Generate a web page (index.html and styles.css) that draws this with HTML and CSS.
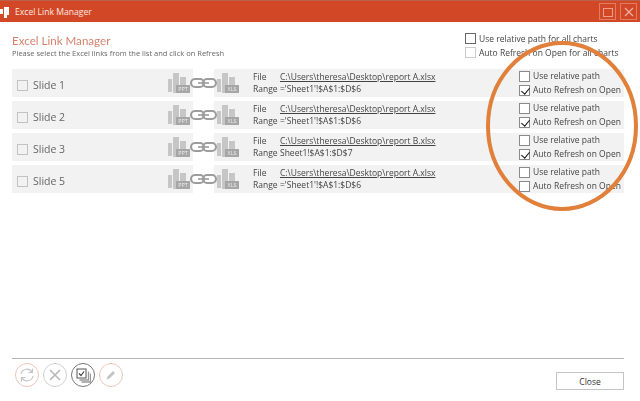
FILE: index.html
```
<!DOCTYPE html>
<html lang="en">
<head>
<meta charset="utf-8">
<title>Excel Link Manager</title>
<link rel="stylesheet" href="styles.css">
</head>
<body>
<div class="app">
  <header class="titlebar">
    <svg class="logo" width="9" height="12" viewBox="0 0 9 12"><path d="M0 3h3v5H0zM4 1h5v8H7v3H4z" fill="#fff"/></svg>
    <span class="titlebar-text">Excel Link Manager</span>
    <span class="win-btn"><svg width="12" height="12" viewBox="0 0 12 12"><rect x="1.500" y="2.500" width="9" height="8" fill="none" stroke="#e9a18d"/></svg></span>
    <span class="win-btn"><svg width="12" height="12" viewBox="0 0 12 12"><path d="M2 2l8 8M10 2l-8 8" stroke="#eeb3a3" stroke-width="1.200"/></svg></span>
  </header>

  <section class="head">
    <div class="head-left">
      <h1 class="heading">Excel Link Manager</h1>
      <p class="sub">Please select the Excel links from the list and click on Refresh</p>
    </div>
    <div class="head-right">
      <label class="opt"><span class="box box-dark"></span>Use relative path for all charts</label>
      <label class="opt"><span class="box box-light"></span>Auto Refresh on Open for all charts</label>
    </div>
  </section>

  <main class="list">
    <div class="row">
      <div class="slide"><span class="box box-slide"></span><span class="slide-name">Slide 1</span>
        <svg class="doc-icon" width="24" height="20" viewBox="0 0 24 20"><path d="M0 6h4v13H0zM5 0h6v20H5zM12 4h6v9h-6z" fill="#c6c6c6"/><rect x="8" y="12" width="14" height="8" fill="#a6a6a6"/><text x="15" y="18.300" class="tag">PPT</text></svg>
      </div>
      <div class="link"><svg width="27" height="12" viewBox="0 0 27 12"><g fill="none" stroke="#9c9c9c" stroke-width="2"><rect x="1" y="2" width="13" height="8" rx="4"/><rect x="13" y="2" width="13" height="8" rx="4"/></g><path d="M8 6h11" stroke="#9c9c9c" stroke-width="1.600"/></svg></div>
      <div class="info">
        <svg class="doc-icon xls" width="24" height="20" viewBox="0 0 24 20"><path d="M0 6h4v13H0zM5 0h6v20H5zM12 4h6v9h-6z" fill="#c6c6c6"/><rect x="8" y="12" width="14" height="8" fill="#a6a6a6"/><text x="15" y="18.300" class="tag">XLS</text></svg>
        <div class="meta">
          <div class="meta-line"><span class="meta-key">File</span><a class="path">C:\Users\theresa\Desktop\report A.xlsx</a></div>
          <div class="meta-line"><span class="meta-key">Range</span><span>='Sheet1'!$A$1:$D$6</span></div>
        </div>
        <div class="opts">
          <label class="opt"><span class="box"></span>Use relative path</label>
          <label class="opt"><span class="box checked"></span>Auto Refresh on Open</label>
        </div>
      </div>
    </div>
    <div class="row">
      <div class="slide"><span class="box box-slide"></span><span class="slide-name">Slide 2</span>
        <svg class="doc-icon" width="24" height="20" viewBox="0 0 24 20"><path d="M0 6h4v13H0zM5 0h6v20H5zM12 4h6v9h-6z" fill="#c6c6c6"/><rect x="8" y="12" width="14" height="8" fill="#a6a6a6"/><text x="15" y="18.300" class="tag">PPT</text></svg>
      </div>
      <div class="link"><svg width="27" height="12" viewBox="0 0 27 12"><g fill="none" stroke="#9c9c9c" stroke-width="2"><rect x="1" y="2" width="13" height="8" rx="4"/><rect x="13" y="2" width="13" height="8" rx="4"/></g><path d="M8 6h11" stroke="#9c9c9c" stroke-width="1.600"/></svg></div>
      <div class="info">
        <svg class="doc-icon xls" width="24" height="20" viewBox="0 0 24 20"><path d="M0 6h4v13H0zM5 0h6v20H5zM12 4h6v9h-6z" fill="#c6c6c6"/><rect x="8" y="12" width="14" height="8" fill="#a6a6a6"/><text x="15" y="18.300" class="tag">XLS</text></svg>
        <div class="meta">
          <div class="meta-line"><span class="meta-key">File</span><a class="path">C:\Users\theresa\Desktop\report A.xlsx</a></div>
          <div class="meta-line"><span class="meta-key">Range</span><span>='Sheet1'!$A$1:$D$6</span></div>
        </div>
        <div class="opts">
          <label class="opt"><span class="box"></span>Use relative path</label>
          <label class="opt"><span class="box checked"></span>Auto Refresh on Open</label>
        </div>
      </div>
    </div>
    <div class="row">
      <div class="slide"><span class="box box-slide"></span><span class="slide-name">Slide 3</span>
        <svg class="doc-icon" width="24" height="20" viewBox="0 0 24 20"><path d="M0 6h4v13H0zM5 0h6v20H5zM12 4h6v9h-6z" fill="#c6c6c6"/><rect x="8" y="12" width="14" height="8" fill="#a6a6a6"/><text x="15" y="18.300" class="tag">PPT</text></svg>
      </div>
      <div class="link"><svg width="27" height="12" viewBox="0 0 27 12"><g fill="none" stroke="#9c9c9c" stroke-width="2"><rect x="1" y="2" width="13" height="8" rx="4"/><rect x="13" y="2" width="13" height="8" rx="4"/></g><path d="M8 6h11" stroke="#9c9c9c" stroke-width="1.600"/></svg></div>
      <div class="info">
        <svg class="doc-icon xls" width="24" height="20" viewBox="0 0 24 20"><path d="M0 6h4v13H0zM5 0h6v20H5zM12 4h6v9h-6z" fill="#c6c6c6"/><rect x="8" y="12" width="14" height="8" fill="#a6a6a6"/><text x="15" y="18.300" class="tag">XLS</text></svg>
        <div class="meta">
          <div class="meta-line"><span class="meta-key">File</span><a class="path">C:\Users\theresa\Desktop\report B.xlsx</a></div>
          <div class="meta-line"><span class="meta-key">Range</span><span>Sheet1!$A$1:$D$7</span></div>
        </div>
        <div class="opts">
          <label class="opt"><span class="box"></span>Use relative path</label>
          <label class="opt"><span class="box checked"></span>Auto Refresh on Open</label>
        </div>
      </div>
    </div>
    <div class="row">
      <div class="slide"><span class="box box-slide"></span><span class="slide-name">Slide 5</span>
        <svg class="doc-icon" width="24" height="20" viewBox="0 0 24 20"><path d="M0 6h4v13H0zM5 0h6v20H5zM12 4h6v9h-6z" fill="#c6c6c6"/><rect x="8" y="12" width="14" height="8" fill="#a6a6a6"/><text x="15" y="18.300" class="tag">PPT</text></svg>
      </div>
      <div class="link"><svg width="27" height="12" viewBox="0 0 27 12"><g fill="none" stroke="#9c9c9c" stroke-width="2"><rect x="1" y="2" width="13" height="8" rx="4"/><rect x="13" y="2" width="13" height="8" rx="4"/></g><path d="M8 6h11" stroke="#9c9c9c" stroke-width="1.600"/></svg></div>
      <div class="info">
        <svg class="doc-icon xls" width="24" height="20" viewBox="0 0 24 20"><path d="M0 6h4v13H0zM5 0h6v20H5zM12 4h6v9h-6z" fill="#c6c6c6"/><rect x="8" y="12" width="14" height="8" fill="#a6a6a6"/><text x="15" y="18.300" class="tag">XLS</text></svg>
        <div class="meta">
          <div class="meta-line"><span class="meta-key">File</span><a class="path">C:\Users\theresa\Desktop\report A.xlsx</a></div>
          <div class="meta-line"><span class="meta-key">Range</span><span>='Sheet1'!$A$1:$D$6</span></div>
        </div>
        <div class="opts">
          <label class="opt"><span class="box"></span>Use relative path</label>
          <label class="opt"><span class="box"></span>Auto Refresh on Open</label>
        </div>
      </div>
    </div>
  </main>

  <footer class="foot">
    <div class="actions">
      <span class="round round-orange"><svg width="16" height="16" viewBox="0 0 16 16" fill="none" stroke="#c4c4c4" stroke-width="1.200"><path d="M2 7a6 6 0 0 1 11-2M14 9a6 6 0 0 1-11 2"/><path d="M13.500 1.500V5.500H9.500M2.500 14.500V10.500H6.500"/></svg></span>
      <span class="round round-grey"><svg width="14" height="14" viewBox="0 0 14 14"><path d="M2 2l10 10M12 2L2 12" stroke="#b8b8b8" stroke-width="1.600"/></svg></span>
      <span class="round round-dark"><svg width="15" height="15" viewBox="0 0 15 15"><path d="M3.500 12h9V3.500" fill="none" stroke="#999" stroke-width="1.300"/><path d="M5.500 14h9V5.500" fill="none" stroke="#999" stroke-width="1.300"/><rect x="1" y="1" width="9" height="9" fill="#fff" stroke="#555"/><path d="M3 5.500l2 2 3-4" fill="none" stroke="#444" stroke-width="1.200"/></svg></span>
      <span class="round round-orange"><svg width="14" height="14" viewBox="0 0 14 14"><path d="M2.500 11.500l1-3 5.500-5.500 2 2-5.500 5.500z" fill="#c4c4c4"/></svg></span>
    </div>
    <button class="close">Close</button>
  </footer>

  <svg class="marker" width="640" height="401" viewBox="0 0 640 401"><ellipse cx="562" cy="126" rx="74" ry="83" fill="none" stroke="#e0803a" stroke-width="4"/></svg>
</div>
</body>
</html>
```
FILE: styles.css
```
* { box-sizing: border-box; }
html, body { margin: 0; padding: 0; background: #fff; }
.app {
  position: relative;
  width: 640px;
  height: 401px;
  display: flex;
  flex-direction: column;
  overflow: hidden;
  font-family: "Open Sans", "Noto Sans", sans-serif;
  font-size: 8.500px;
  color: #444;
  filter: blur(0.35px);
}
.titlebar {
  height: 22px;
  flex: none;
  background: #d24726;
  border-top: 1px solid #b9614a;
  display: flex;
  align-items: center;
  padding-right: 3px;
  color: #fbe9e3;
  font-size: 8.600px;
}
.logo { margin-right: 6px; margin-left: 0; }
.titlebar-text { flex: 1; }
.win-btn {
  width: 17px;
  height: 17px;
  margin-left: 4px;
  border: 1px solid #e07d62;
  display: flex;
  align-items: center;
  justify-content: center;
}
.head {
  height: 47px;
  flex: none;
  display: flex;
  justify-content: space-between;
  padding: 11px 0 0 12px;
}
.heading {
  margin: 0;
  font-family: Lato, "Open Sans", sans-serif;
  font-size: 11.600px;
  line-height: 15px;
  font-weight: 400;
  color: #d5826c;
}
.sub { margin: 0; font-size: 7.500px; line-height: 10px; color: #666; }
.head-right {
  width: 175px;
  display: flex;
  flex-direction: column;
  gap: 3px;
}
.opt {
  height: 11px;
  display: flex;
  align-items: center;
  gap: 3px;
  white-space: nowrap;
  color: #444;
}
.box {
  width: 11px;
  height: 11px;
  flex: none;
  background: #fff;
  border: 1px solid #8a8a8a;
  position: relative;
}
.box-dark { border-color: #666; }
.box-light { border-color: #ccc; }
.box-slide { background: transparent; border-color: #c2c2c2; margin-right: 5px; }
.checked::after {
  content: "";
  position: absolute;
  left: 3px;
  top: 0;
  width: 4px;
  height: 7px;
  border: solid #111;
  border-width: 0 1.500px 1.500px 0;
  transform: rotate(40deg);
}
.list { display: flex; flex-direction: column; gap: 4px; padding: 0 16px 0 12px; flex: none; }
.row { display: flex; height: 28px; }
.slide {
  width: 181px;
  background: #f2f2f2;
  display: flex;
  align-items: center;
  padding: 4px 1px 0 5px;
}
.slide-name { flex: 1; font-size: 10.500px; color: #666; }
.doc-icon { flex: none; align-self: flex-end; margin-bottom: 4px; }
.tag { font-size: 5.500px; fill: #eee; text-anchor: middle; font-family: "Open Sans", sans-serif; }
.link { width: 21px; display: flex; align-items: center; justify-content: center; flex: none; }
.link svg { flex: none; margin: 0 -3px; position: relative; }
.info { flex: 1; background: #f2f2f2; display: flex; align-items: center; }
.doc-icon.xls { margin: 0 12px 4px 3px; }
.meta { flex: 1; }
.meta-line { display: flex; line-height: 12px; height: 12px; white-space: nowrap; }
.meta-key { width: 27px; color: #444; }
.path { text-decoration: underline; color: #444; }
.opts { width: 105px; display: flex; flex-direction: column; gap: 3px; margin-top: -2px; }
.opts .box { margin-top: 2px; }
.foot {
  margin: auto 16px 11px 12px;
  border-top: 1px solid #b5b5b5;
  padding-top: 4px;
  height: 32px;
  display: flex;
  justify-content: space-between;
  align-items: flex-start;
}
.actions { display: flex; gap: 4px; margin-left: 3px; }
.round {
  width: 24px;
  height: 24px;
  border-radius: 50%;
  border: 1px solid;
  display: flex;
  align-items: center;
  justify-content: center;
}
.round-orange { border-color: #eec4b8; }
.round-grey { border-color: #cfcfcf; }
.round-dark { border-color: #777; }
.close {
  width: 68px;
  height: 18px;
  margin-top: 9px;
  background: #fff;
  border: 1px solid #c4c4c4;
  font: inherit;
  color: #333;
  padding: 0;
}
.marker { position: absolute; left: 0; top: 0; pointer-events: none; }
```
